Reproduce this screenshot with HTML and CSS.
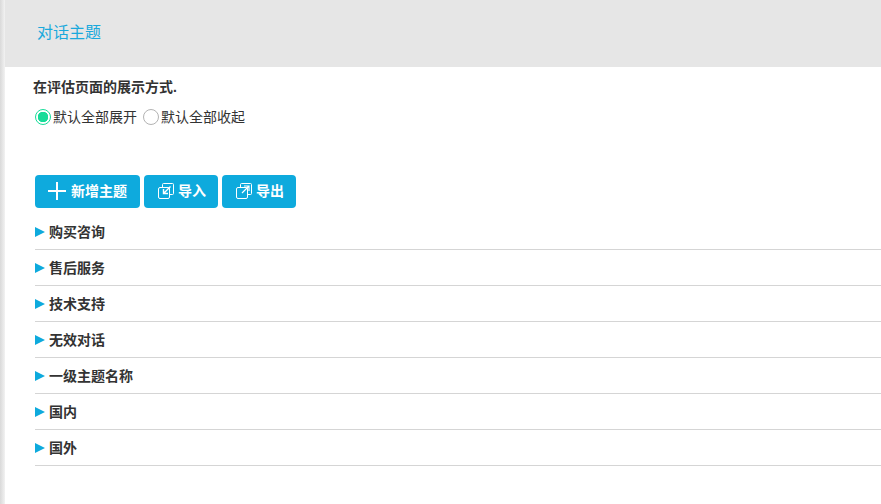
FILE: index.html
```html
<!DOCTYPE html>
<html lang="zh">
<head>
<meta charset="utf-8">
<title>对话主题</title>
<link rel="stylesheet" href="styles.css">
</head>
<body>
<div class="page">
  <header class="head"><h1 class="title">对话主题</h1></header>
  <main class="content">
    <p class="desc">在评估页面的展示方式.</p>
    <div class="radios">
      <label class="radio"><span class="dot on"></span>默认全部展开</label>
      <label class="radio"><span class="dot"></span>默认全部收起</label>
    </div>
    <div class="toolbar">
      <button class="btn btn-add"><svg class="plus" width="18" height="18" viewBox="0 0 18 18"><path d="M9 0V18M0 9H18" stroke="#fff" stroke-width="2" fill="none"/></svg>新增主题</button>
      <button class="btn"><svg class="ico" width="16" height="16" viewBox="0 0 16 16" fill="none" stroke="#fff" stroke-width="1"><path d="M4.5 4.5V1.5a1 1 0 0 1 1-1h9a1 1 0 0 1 1 1v9a1 1 0 0 1-1 1h-3"/><rect x=".5" y="4.5" width="11" height="11" rx="1.5"/><path d="M12.5 3.5L6 10M5.5 6V10.5H10" stroke-width="1.4"/></svg>导入</button>
      <button class="btn"><svg class="ico" width="16" height="16" viewBox="0 0 16 16" fill="none" stroke="#fff" stroke-width="1"><path d="M4.5 4.5V1.5a1 1 0 0 1 1-1h9a1 1 0 0 1 1 1v9a1 1 0 0 1-1 1h-3"/><rect x=".5" y="4.5" width="11" height="11" rx="1.5"/><path d="M6 10L12.5 3.5M8 3H13V8" stroke-width="1.2"/></svg>导出</button>
    </div>
    <ul class="topics">
      <li class="topic"><span class="arrow"></span>购买咨询</li>
      <li class="topic"><span class="arrow"></span>售后服务</li>
      <li class="topic"><span class="arrow"></span>技术支持</li>
      <li class="topic"><span class="arrow"></span>无效对话</li>
      <li class="topic"><span class="arrow"></span>一级主题名称</li>
      <li class="topic"><span class="arrow"></span>国内</li>
      <li class="topic"><span class="arrow"></span>国外</li>
    </ul>
  </main>
</div>
</body>
</html>
```
FILE: styles.css
```css
* { box-sizing: border-box; }
html, body { margin: 0; padding: 0; height: 100%; overflow: hidden; background: #fff; }
body { font-family: "Liberation Sans", "Noto Sans CJK SC", sans-serif; color: #333; font-size: 14px; }
.page { height: 504px; padding-left: 5px; background: linear-gradient(to right, #d9d9d9, #f2f2f2) left top / 5px 100% no-repeat; }
.head { height: 67px; background: #e6e6e6; padding: 0 0 5px 32px; display: flex; align-items: center; }
.title { margin: 0; font-size: 16px; font-weight: 400; color: #1aa9dc; }
.content { padding-left: 28px; }
.desc { margin: 0; padding-top: 12px; font-size: 14px; line-height: 17px; font-weight: 700; }
.radios { display: flex; gap: 6px; margin-top: 12px; padding-left: 2px; }
.radio { display: flex; align-items: center; line-height: 18px; }
.dot { width: 16px; height: 16px; border-radius: 50%; border: 1.5px solid #b3b3b3; margin-right: 2px; background: #fff; }
.dot.on { border-color: #17dc99; background: radial-gradient(circle, #17dc99 0 5px, #fff 5.5px); }
.toolbar { display: flex; gap: 4px; margin-top: 49px; padding-left: 2px; }
.btn { display: flex; align-items: center; justify-content: center; height: 33px; width: 74px; padding: 0 0 4px 2px; border: 0; border-radius: 4px; background: #0eaadd; color: #fff; font: 700 14px "Liberation Sans", "Noto Sans CJK SC", sans-serif; }
.btn-add { width: 105px; padding-left: 0; }
.plus { margin: 3px 5px 0 0; }
.ico { margin: 3px 4px 0 0; }
.topics { list-style: none; margin: 6px 0 0 2px; padding: 0; }
.topic { display: flex; align-items: center; height: 36px; padding-bottom: 2px; border-bottom: 1px solid #d5d5d5; font-weight: 700; font-size: 14px; }
.arrow { width: 0; height: 0; margin: 2px 4px 0 0; border-left: 10px solid #0eaadd; border-top: 5.5px solid transparent; border-bottom: 5.5px solid transparent; }
```
